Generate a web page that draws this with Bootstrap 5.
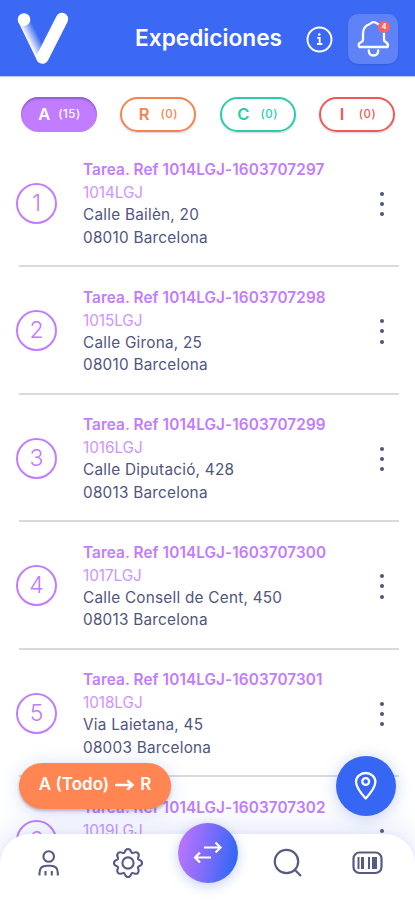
<!DOCTYPE html>
<html lang="es">
<head>
<meta charset="utf-8">
<meta name="viewport" content="width=device-width, initial-scale=1">
<title>Expediciones</title>
<link href="https://cdn.jsdelivr.net/npm/bootstrap@5.3.0/dist/css/bootstrap.min.css" rel="stylesheet">
<style>
:root{--violet:#c27cff;--blue:#3c69f4;--ink:#50557f;--orange:#ff8652}
body{font-family:Inter,"Liberation Sans",sans-serif;color:var(--ink);background:#fff}
.screen{width:415px;height:900px}
.topbar{height:76px;background:var(--blue);box-shadow:0 1px 1px #3c69f455}
.logo{margin-left:15px}
.topbar h1{font-size:22.7px;font-weight:600;line-height:30px;margin:0 0 0 64px;width:147px;white-space:nowrap}
.info-btn{margin-left:24px;margin-top:2px}
.bell{width:50px;height:50px;margin-left:15px;margin-top:1px;background:#5f83f7;border-radius:10px;box-shadow:0 1px 2px #2447bd66}
.filters{padding:21px 20px 0 21px;height:56px}
.pill{width:76px;height:35px;border:2px solid currentColor;font-weight:600;font-size:16.5px;gap:8px;box-shadow:0 1px 2px #50557f44}
.pill small{font-size:11.5px;font-weight:500;letter-spacing:.5px}
.pill-r,.pill-c,.pill-i{gap:11px}
.pill-a{background:var(--violet);border:0;color:#fff;box-shadow:inset 0 2px 2px #7350b8aa}
.pill-a{padding-left:1px}
.pill-r{color:#f6834f}.pill-c{color:#2accab}.pill-i{color:#ee5a55;padding-left:2px}
.tasks{padding:7.500px 16px 0 19px}
.task{height:127.5px;border-bottom:2px solid #dadade;padding-top:19.500px}
.num{width:41px;height:41px;border:2px solid var(--violet);color:var(--violet);font-size:23px;font-weight:300;margin:23.500px 0 0 -3px;line-height:1}
.info{margin-left:26px;width:270px;font-size:15.3px;line-height:22.3px;white-space:nowrap;letter-spacing:.25px}
.info .ref{font-weight:600;color:var(--violet);letter-spacing:.1px}
.info .code{color:#cd94ff;font-weight:400;letter-spacing:-.05px;line-height:23px}
.dots{margin:32.500px 0 0 27px;width:4px}
.dots i{width:4px;height:4px;margin-bottom:6.3px;background:var(--ink)}
.tabbar{height:66px;background:#fff;border-radius:30px 30px 0 0;box-shadow:0 -5px 30px #5877df30,0 -1px 4px #5877df12}
.slot{width:48px}
.swap{width:60px;height:60px;left:178px;top:823px;background:linear-gradient(100deg,#bc75fd 5%,#7b6cfa 50%,#3567f5 90%);box-shadow:0 3px 13px #5877df55;z-index:3}
.pin{width:60px;height:60px;left:336px;top:756px;background:#3567f4;box-shadow:0 2px 16px #5877df55}
.move{left:19px;top:763px;width:152px;height:46px;padding-bottom:2px;background:var(--orange);font-size:17px;font-weight:600;gap:6px;box-shadow:0 2px 3px #63496855,0 2px 18px #5877df40}
.tally{left:30px;top:7px;width:12px;height:12px;background:#fa6360;font-size:7px;font-weight:700;line-height:12px}
</style>
<script src="https://cdn.jsdelivr.net/npm/bootstrap@5.3.0/dist/js/bootstrap.bundle.min.js"></script>
</head>
<body>
<div class="screen position-relative overflow-hidden">
<header class="topbar d-flex align-items-center text-white">
  <svg class="logo" width="56" height="76" viewBox="15 0 56 76"><defs><linearGradient id="side" gradientUnits="userSpaceOnUse" x1="28" y1="41" x2="38" y2="36"><stop offset="0" stop-color="#fff"/><stop offset="1" stop-color="#fff" stop-opacity=".05"/></linearGradient></defs><path d="M24 20 42 57" stroke="url(#side)" stroke-width="12" stroke-linecap="round"/><path d="M62 19 42.500 57.500" stroke="#fff" stroke-width="12.500" stroke-linecap="round"/><circle cx="24" cy="19.500" r="6.300" fill="#fff"/></svg>
  <h1>Expediciones</h1>
  <svg class="info-btn" width="27" height="27" viewBox="0 0 27 27" fill="none" stroke="#fff"><circle cx="13.500" cy="13.500" r="12" stroke-width="1.900"/><path d="M11.200 11.800h2.500v6.200m-2.700 0h5.300" stroke-width="1.800"/><circle cx="13.300" cy="8.500" r="1.300" fill="#fff" stroke="none"/></svg>
  <div class="bell position-relative"><svg class="d-block" width="50" height="50" viewBox="0 0 50 50" fill="none" stroke="#fff" stroke-width="2.300" stroke-linecap="round" stroke-linejoin="round"><path d="M15 26v-6q0-8 7-10Q25.500 6.500 29 9.500 36 12 36 20v6q0 1.500 2 2.200Q41 30 39.500 33H11.500Q9 30 13 28.200 15 27.500 15 26ZM20.800 36.500q0 5 4.700 5t4.700-5"/></svg><span class="tally position-absolute rounded-circle text-center text-white">4</span></div>
</header>
<div class="filters d-flex justify-content-between">
  <div class="pill pill-a rounded-pill d-flex align-items-center justify-content-center">A <small>(15)</small></div>
  <div class="pill pill-r rounded-pill d-flex align-items-center justify-content-center">R <small>(0)</small></div>
  <div class="pill pill-c rounded-pill d-flex align-items-center justify-content-center">C <small>(0)</small></div>
  <div class="pill pill-i rounded-pill d-flex align-items-center justify-content-center">I <small>&nbsp;(0)</small></div>
</div>
<main class="tasks">
  <article class="task d-flex align-items-start"><div class="num rounded-circle d-flex align-items-center justify-content-center">1</div><div class="info"><div class="ref">Tarea. Ref 1014LGJ-1603707297</div><div class="code">1014LGJ</div><div>Calle Bailèn, 20</div><div>08010 Barcelona</div></div><div class="dots d-flex flex-column"><i class="rounded-circle"></i><i class="rounded-circle"></i><i class="rounded-circle"></i></div></article>
  <article class="task d-flex align-items-start"><div class="num rounded-circle d-flex align-items-center justify-content-center">2</div><div class="info"><div class="ref">Tarea. Ref 1014LGJ-1603707298</div><div class="code">1015LGJ</div><div>Calle Girona, 25</div><div>08010 Barcelona</div></div><div class="dots d-flex flex-column"><i class="rounded-circle"></i><i class="rounded-circle"></i><i class="rounded-circle"></i></div></article>
  <article class="task d-flex align-items-start"><div class="num rounded-circle d-flex align-items-center justify-content-center">3</div><div class="info"><div class="ref">Tarea. Ref 1014LGJ-1603707299</div><div class="code">1016LGJ</div><div>Calle Diputació, 428</div><div>08013 Barcelona</div></div><div class="dots d-flex flex-column"><i class="rounded-circle"></i><i class="rounded-circle"></i><i class="rounded-circle"></i></div></article>
  <article class="task d-flex align-items-start"><div class="num rounded-circle d-flex align-items-center justify-content-center">4</div><div class="info"><div class="ref">Tarea. Ref 1014LGJ-1603707300</div><div class="code">1017LGJ</div><div>Calle Consell de Cent, 450</div><div>08013 Barcelona</div></div><div class="dots d-flex flex-column"><i class="rounded-circle"></i><i class="rounded-circle"></i><i class="rounded-circle"></i></div></article>
  <article class="task d-flex align-items-start"><div class="num rounded-circle d-flex align-items-center justify-content-center">5</div><div class="info"><div class="ref">Tarea. Ref 1014LGJ-1603707301</div><div class="code">1018LGJ</div><div>Via Laietana, 45</div><div>08003 Barcelona</div></div><div class="dots d-flex flex-column"><i class="rounded-circle"></i><i class="rounded-circle"></i><i class="rounded-circle"></i></div></article>
  <article class="task d-flex align-items-start"><div class="num rounded-circle d-flex align-items-center justify-content-center">6</div><div class="info"><div class="ref">Tarea. Ref 1014LGJ-1603707302</div><div class="code">1019LGJ</div></div><div class="dots d-flex flex-column"><i class="rounded-circle"></i><i class="rounded-circle"></i><i class="rounded-circle"></i></div></article>
</main>
<nav class="tabbar position-absolute bottom-0 start-0 w-100 d-flex justify-content-between px-4">
  <svg width="48" height="58" viewBox="24 834 48 58" fill="none" stroke="#565b84" stroke-width="2.100"><circle cx="48.700" cy="856.500" r="5.300"/><path d="M39.500 875.500v-2.500q0-7.300 7.300-7.300h3.700q7.300 0 7.300 7.300v2.500M45.500 871v4.500M51.800 871v4.500"/></svg>
  <svg width="48" height="58" viewBox="-24 -29 48 58" fill="none" stroke="#565b84" stroke-width="2.100" stroke-linejoin="round"><path d="M-4.100-10C-2.500-10.600-3.500-14 0-14S2.500-10.600 4.100-10C5.700-9.500 7.500-12.200 9.900-9.900S9.500-5.700 10-4.100C10.600-2.500 14-3.500 14 0S10.600 2.500 10 4.100C9.500 5.700 12.200 7.500 9.900 9.900S5.700 9.500 4.100 10C2.500 10.600 3.500 14 0 14S-2.500 10.600-4.100 10C-5.700 9.500-7.500 12.200-9.900 9.900S-9.500 5.700-10 4.100C-10.600 2.500-14 3.500-14 0S-10.600-2.500-10-4.100C-9.500-5.700-12.200-7.500-9.900-9.900S-5.700-9.500-4.100-10Z"/><circle r="5.600"/></svg>
  <span class="slot"></span>
  <svg width="48" height="58" viewBox="263 834 48 58" fill="none" stroke="#565b84" stroke-width="2.200"><circle cx="286.500" cy="861.500" r="11.700"/><path d="m295 870 6 6"/></svg>
  <svg width="48" height="58" viewBox="343 834 48 58" fill="none" stroke="#565b84"><rect x="353.500" y="852.500" width="28" height="20.500" rx="6" stroke-width="2.200"/><path d="M358.500 857v12" stroke-width="2"/><path d="M362.500 857v12" stroke-width="3"/><path d="M369 857v12" stroke-width="2"/><path d="M374.500 857v12" stroke-width="5"/></svg>
</nav>
<div class="move position-absolute rounded-pill text-white d-flex align-items-center justify-content-center"><span>A (Todo)</span><svg width="19" height="14" viewBox="0 0 19 14" fill="none" stroke="#fff" stroke-width="2.400" stroke-linecap="round"><path d="M1 7h16M13 3l4.500 4-4.500 4"/></svg><span>R</span></div>
<div class="pin position-absolute rounded-circle"><svg class="d-block" width="60" height="60" viewBox="0 0 60 60" fill="none" stroke="#fff" stroke-width="2.300"><path d="M29.700 42.500Q20 32 20 25.800a9.700 8.800 0 0 1 19.400 0Q39.400 32 29.700 42.500Z" stroke-linejoin="round"/><circle cx="29.700" cy="25.500" r="3.400"/></svg></div>
<div class="swap position-absolute rounded-circle"><svg class="d-block" width="60" height="60" viewBox="0 0 60 60" fill="none" stroke="#fff" stroke-width="2.200"><path d="M26 24.500h16M37.500 19.500l5 5-5 5M33 34.500H17.500M22 29.500l-5 5 5 5"/></svg></div>
</div>
</body>
</html>
